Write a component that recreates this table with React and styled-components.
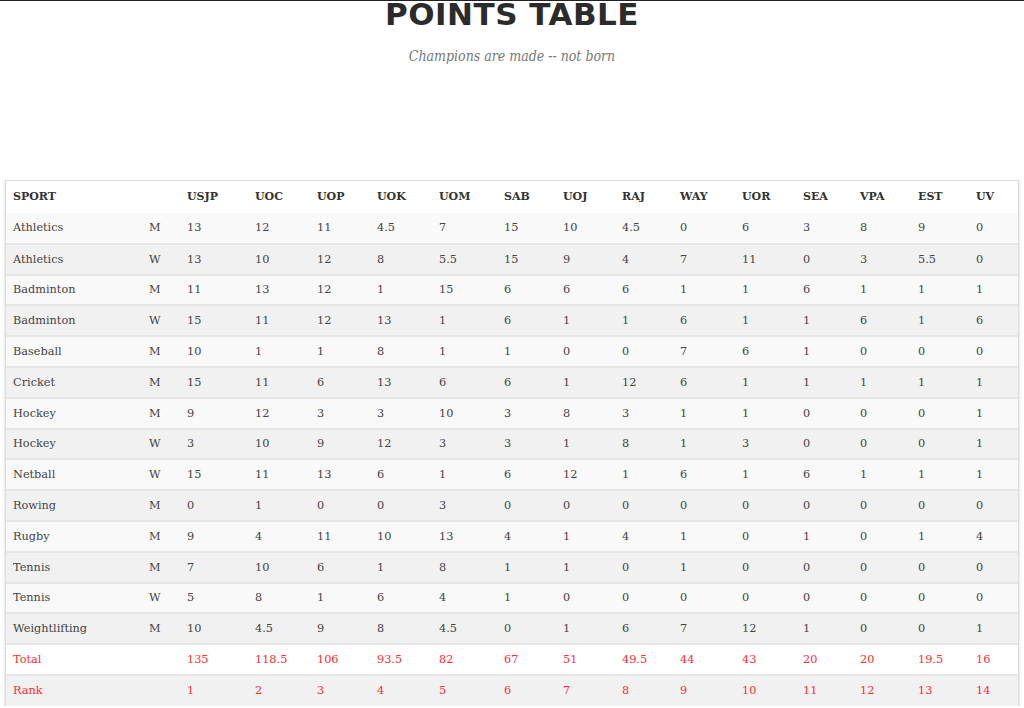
import React from "react";
import styled, { createGlobalStyle } from "styled-components";

const Global = createGlobalStyle`
  html, body { margin: 0; padding: 0; background: #fff; }
  body { font-family: "DejaVu Serif", serif; overflow: hidden; }
`;

const TopBar = styled.div`
  height: 1px;
  background: #222;
`;

const Header = styled.header`
  text-align: center;
  height: 179px;
  overflow: hidden;
`;

const Title = styled.h1`
  margin: -7px 0 0;
  font-family: "DejaVu Sans", sans-serif;
  font-weight: 700;
  font-size: 31px;
  line-height: 40px;
  color: #2b2b2b;
  letter-spacing: 0.5px;
`;

const Subtitle = styled.p`
  margin: 14px 0 0;
  font-family: "DejaVu Serif Condensed", "DejaVu Serif", serif;
  font-stretch: condensed;
  font-style: italic;
  font-size: 14px;
  color: #777;
`;

const Wrap = styled.div`
  margin: 0 5px;
  border: 1px solid #dcdcdc;
  border-bottom: none;
  box-shadow: 0 2px 3px rgba(0, 0, 0, 0.18);
`;

const Table = styled.table`
  width: 100%;
  border-collapse: collapse;
  table-layout: fixed;
  font-size: 11.3px;
  color: #444;
`;

const Col = styled.col`
  width: ${(p) => p.$w}px;
`;

const Row = styled.tr`
  background: ${(p) => p.$bg};
  border-top: 2px solid #e6e6e6;
  color: ${(p) => (p.$red ? "#ff2d2d" : "#444")};
  &:first-child { border-top: none; }
`;

const Th = styled.th`
  box-sizing: border-box;
  text-align: left;
  font-weight: 700;
  color: #333;
  height: 32px;
  padding: 0 0 2px 7px;
  font-size: 11px;
`;

const Td = styled.td`
  box-sizing: border-box;
  height: 30.8px;
  padding: 1px 0 0 7px;
  line-height: 14px;
  white-space: nowrap;
`;

const cols = ["USJP","UOC","UOP","UOK","UOM","SAB","UOJ","RAJ","WAY","UOR","SEA","VPA","EST","UV"];
const widths = [136, 38, 68, 62, 60, 62, 65, 59, 59, 58, 62, 61, 57, 58, 58, 49];

const rows = [
  ["Athletics","M",13,12,11,4.5,7,15,10,4.5,0,6,3,8,9,0],
  ["Athletics","W",13,10,12,8,5.5,15,9,4,7,11,0,3,5.5,0],
  ["Badminton","M",11,13,12,1,15,6,6,6,1,1,6,1,1,1],
  ["Badminton","W",15,11,12,13,1,6,1,1,6,1,1,6,1,6],
  ["Baseball","M",10,1,1,8,1,1,0,0,7,6,1,0,0,0],
  ["Cricket","M",15,11,6,13,6,6,1,12,6,1,1,1,1,1],
  ["Hockey","M",9,12,3,3,10,3,8,3,1,1,0,0,0,1],
  ["Hockey","W",3,10,9,12,3,3,1,8,1,3,0,0,0,1],
  ["Netball","W",15,11,13,6,1,6,12,1,6,1,6,1,1,1],
  ["Rowing","M",0,1,0,0,3,0,0,0,0,0,0,0,0,0],
  ["Rugby","M",9,4,11,10,13,4,1,4,1,0,1,0,1,4],
  ["Tennis","M",7,10,6,1,8,1,1,0,1,0,0,0,0,0],
  ["Tennis","W",5,8,1,6,4,1,0,0,0,0,0,0,0,0],
  ["Weightlifting","M",10,4.5,9,8,4.5,0,1,6,7,12,1,0,0,1],
];

const total = ["Total","",135,118.5,106,93.5,82,67,51,49.5,44,43,20,20,19.5,16];
const rank = ["Rank","",1,2,3,4,5,6,7,8,9,10,11,12,13,14];

export default function App() {
  return (
    <>
      <Global />
      <TopBar />
      <Header>
        <Title>POINTS TABLE</Title>
        <Subtitle>Champions are made -- not born</Subtitle>
      </Header>
      <Wrap>
        <Table>
          <colgroup>
            {widths.map((w, i) => <Col key={i} $w={w} />)}
          </colgroup>
          <thead>
            <Row $bg="#fff">
              <Th>SPORT</Th>
              <Th />
              {cols.map((c) => <Th key={c}>{c}</Th>)}
            </Row>
          </thead>
          <tbody>
            {rows.map((r, i) => (
              <Row key={i} $bg={i % 2 === 0 ? "#f9f9f9" : "#f1f1f1"}>
                {r.map((v, j) => <Td key={j}>{v}</Td>)}
              </Row>
            ))}
            <Row $bg="#fff" $red>
              {total.map((v, j) => <Td key={j}>{v}</Td>)}
            </Row>
            <Row $bg="#f1f1f1" $red>
              {rank.map((v, j) => <Td key={j}>{v}</Td>)}
            </Row>
          </tbody>
        </Table>
      </Wrap>
    </>
  );
}
